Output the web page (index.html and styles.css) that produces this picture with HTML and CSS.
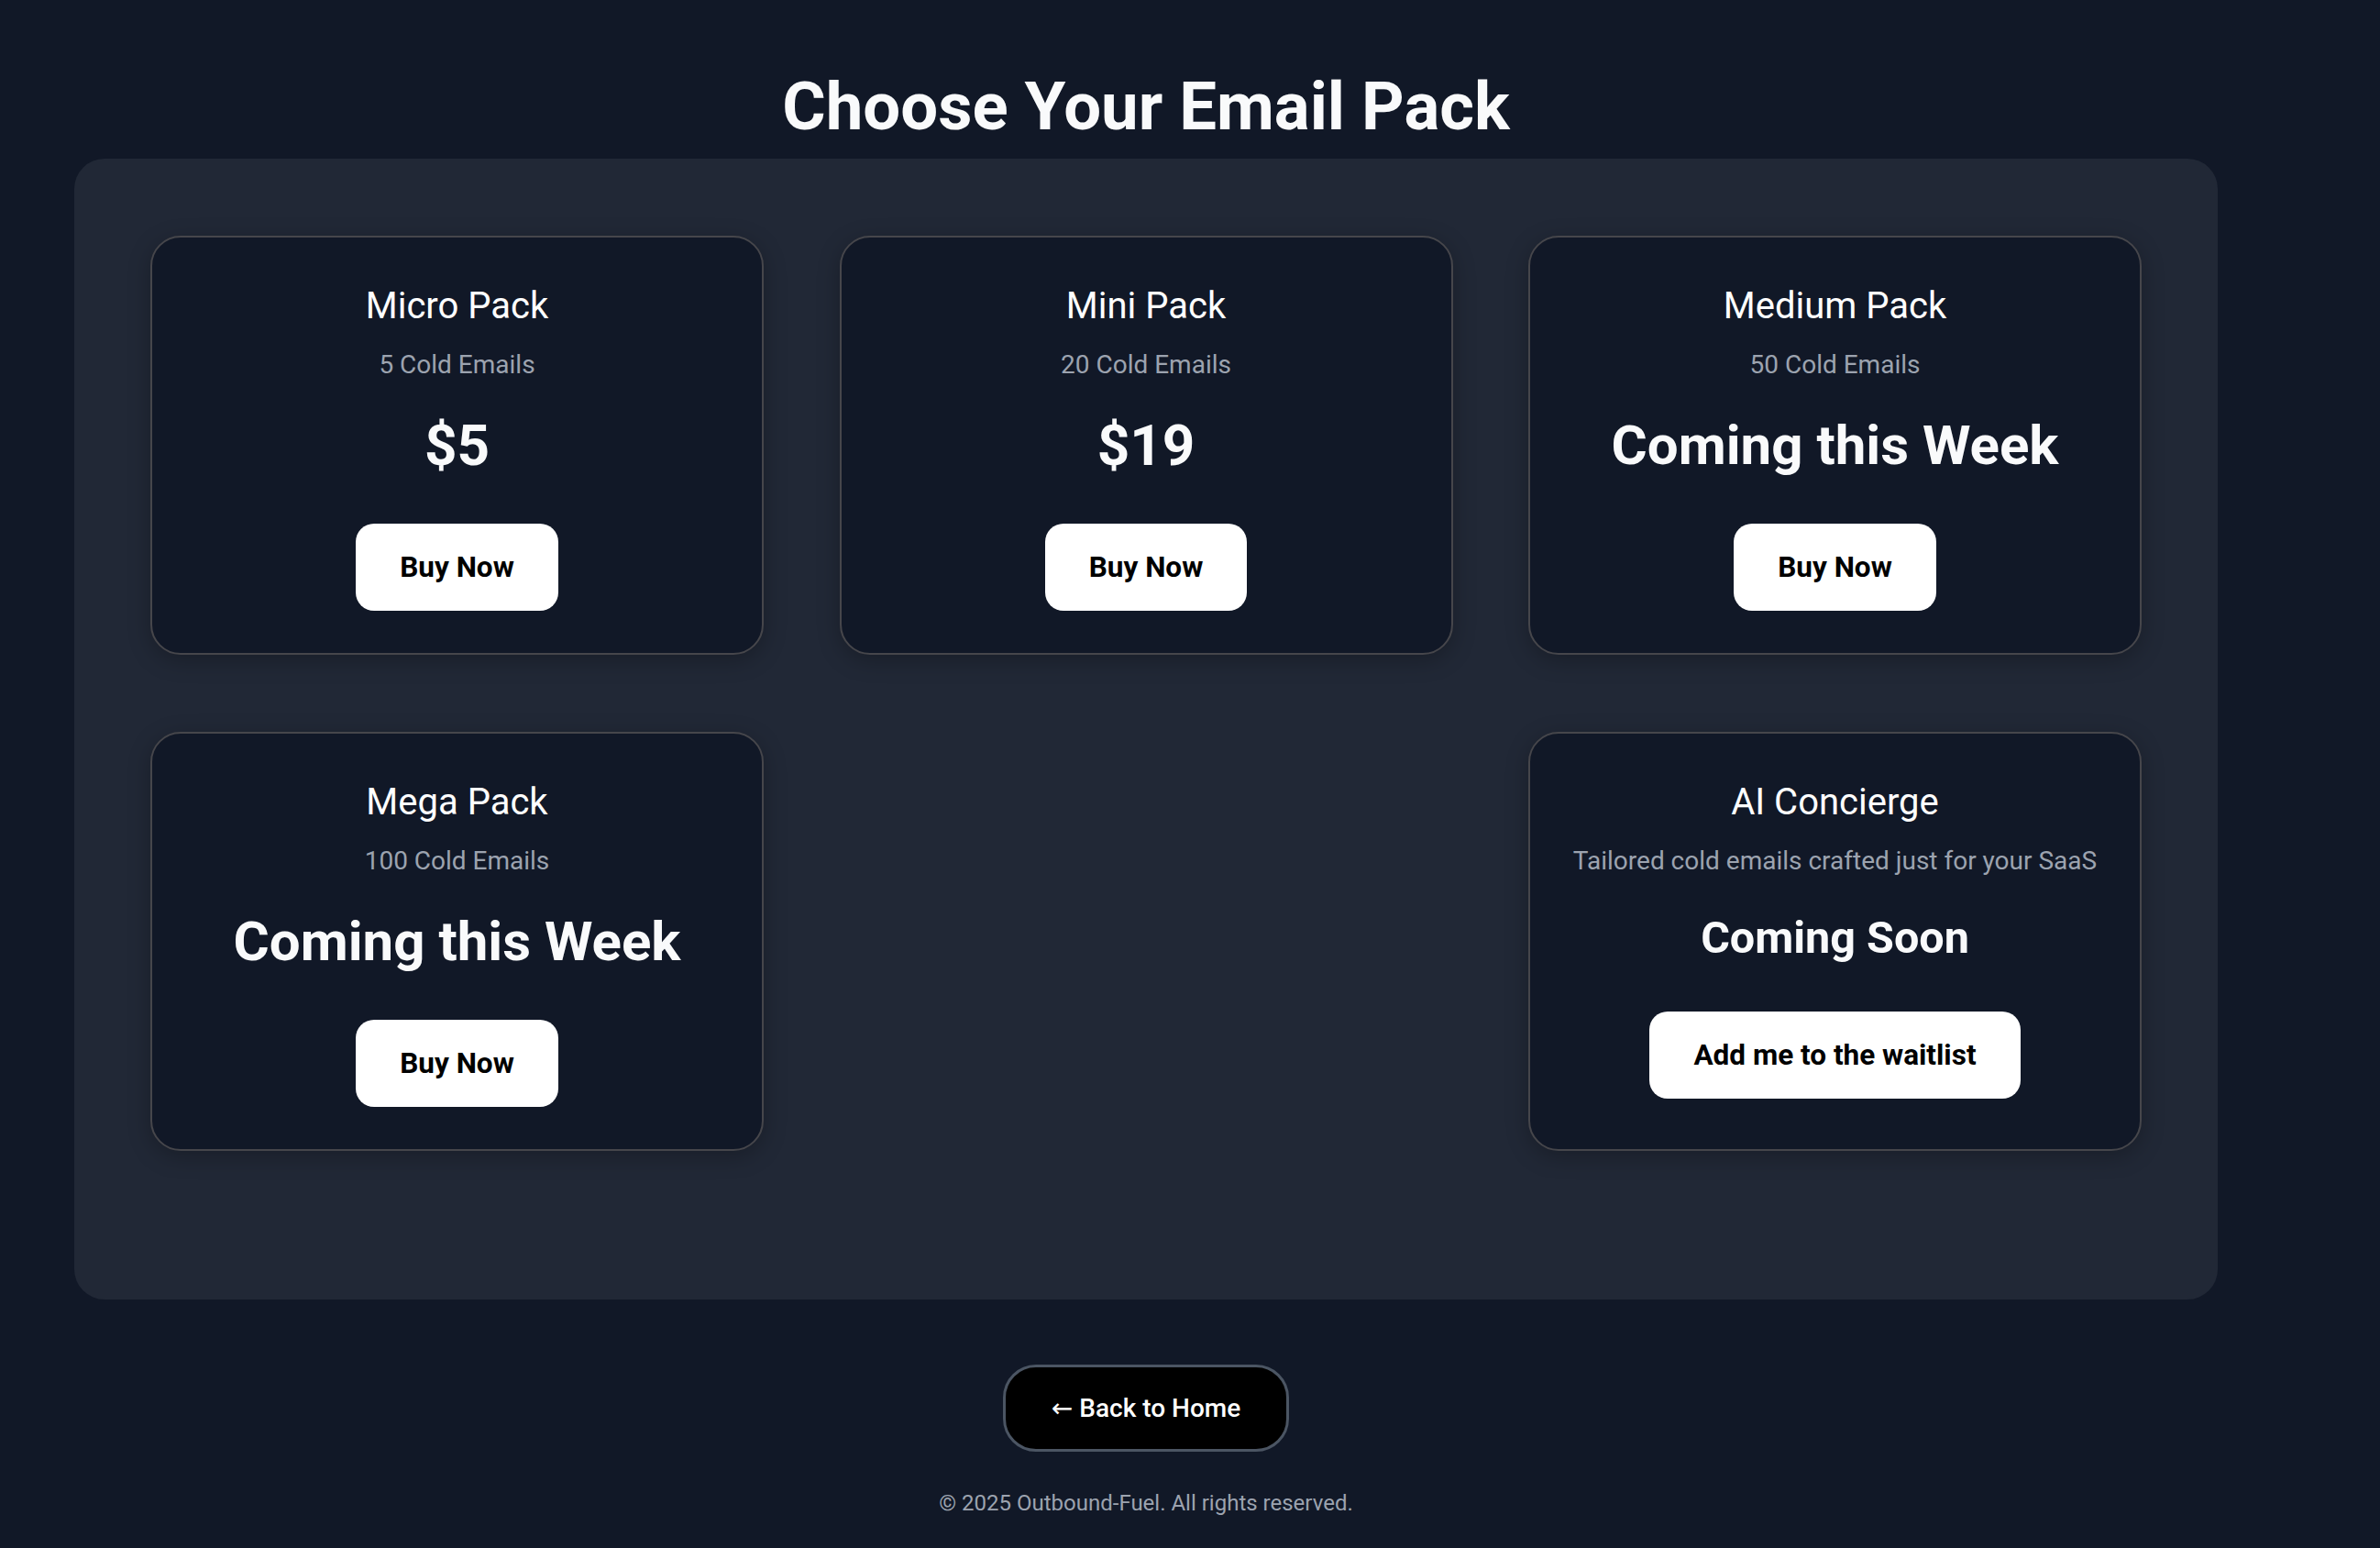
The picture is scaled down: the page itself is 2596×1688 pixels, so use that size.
FILE: index.html
```html
<!DOCTYPE html>
<html lang="en">
<head>
    <meta charset="UTF-8">
    <meta name="viewport" content="width=device-width, initial-scale=1.0">
    <title>Choose Your Email Pack</title>
    <link rel="stylesheet" href="styles.css">
</head>
<body>
    <div class="page">
        <h1>Choose Your Email Pack</h1>
        <div class="packs">
            <div class="pack">
                <h3>Micro Pack</h3>
                <p>5 Cold Emails</p>
                <div class="price">$5</div>
                <button type="button">Buy Now</button>
            </div>
            <div class="pack">
                <h3>Mini Pack</h3>
                <p>20 Cold Emails</p>
                <div class="price">$19</div>
                <button type="button">Buy Now</button>
            </div>
            <div class="pack">
                <h3>Medium Pack</h3>
                <p>50 Cold Emails</p>
                <div class="price week">Coming this Week</div>
                <button type="button">Buy Now</button>
            </div>
            <div class="pack">
                <h3>Mega Pack</h3>
                <p>100 Cold Emails</p>
                <div class="price week">Coming this Week</div>
                <button type="button">Buy Now</button>
            </div>
            <div class="pack">
                <h3>AI Concierge</h3>
                <p>Tailored cold emails crafted just for your SaaS</p>
                <div class="price soon">Coming Soon</div>
                <button type="button">Add me to the waitlist</button>
            </div>
        </div>
        <a class="back-btn" href="#"><span class="arrow">&larr;</span> Back to Home</a>
        <footer>&copy; 2025 Outbound-Fuel. All rights reserved.</footer>
    </div>
</body>
</html>
```

FILE: styles.css
```css
body {
    font-family: Roboto, "Liberation Sans", sans-serif;
    margin: 0;
    padding: 0;
    background-color: #111827;
    color: #f9fafb;
}

.page {
    width: 2338px;
    margin-left: 81px;
    display: flex;
    flex-direction: column;
    align-items: center;
}

h1 {
    font-size: 72.5px;
    font-weight: 700;
    margin: 74px 0 14px;
}

.packs {
    box-sizing: border-box;
    width: 100%;
    padding: 84px 83px 162px;
    background-color: #212836;
    border-radius: 33px;
    display: flex;
    flex-wrap: wrap;
    justify-content: space-between;
    row-gap: 84px;
}

.pack {
    box-sizing: border-box;
    width: 669px;
    padding: 51px 20px 46px;
    background-color: #111827;
    border: 2px solid #46464b;
    border-radius: 33px;
    box-shadow: 0 6px 24px rgba(0, 0, 0, 0.25);
    text-align: center;
}

.pack h3 {
    font-size: 40px;
    line-height: 47px;
    font-weight: 400;
    color: #ffffff;
    margin: 0 0 26px;
}

.pack p {
    font-size: 28px;
    line-height: 30px;
    color: #9ca3af;
    margin: 0;
}

.price {
    font-size: 62px;
    line-height: 73px;
    font-weight: 700;
    margin: 36px 0 49px;
}

.price.week {
    font-size: 60px;
}

.price.soon {
    font-size: 48.5px;
    line-height: 54px;
    margin: 42px 0 53px;
}

.pack button {
    font-family: inherit;
    font-size: 31.5px;
    line-height: 45px;
    font-weight: 700;
    color: #000000;
    background-color: #ffffff;
    border: none;
    border-radius: 20px;
    padding: 25px 48px;
    cursor: pointer;
}

.back-btn {
    margin-top: 71px;
    padding: 28px 50px;
    font-size: 28px;
    line-height: 33px;
    font-weight: 500;
    color: #ffffff;
    background-color: #000000;
    border: 3px solid #4b5563;
    border-radius: 36px;
    text-decoration: none;
}

.arrow {
    font-family: "DejaVu Sans", sans-serif;
    font-weight: 400;
}

footer {
    margin-top: 42px;
    font-size: 24px;
    color: #9ca3af;
}
```
